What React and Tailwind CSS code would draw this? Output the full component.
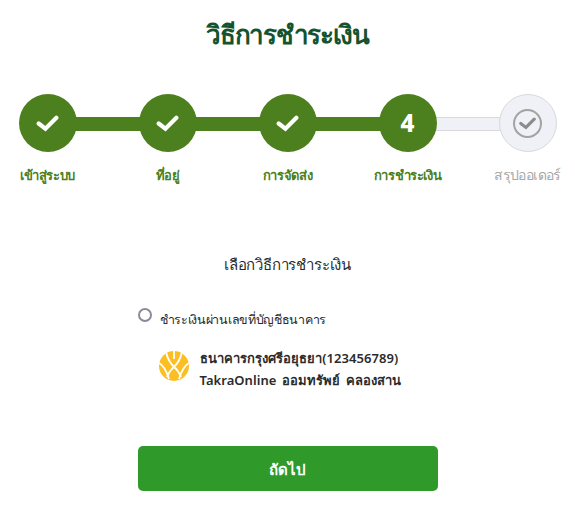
const steps = [
  { label: 'เข้าสู่ระบบ', done: true },
  { label: 'ที่อยู่', done: true },
  { label: 'การจัดส่ง', done: true },
  { label: 'การชำระเงิน', num: '4' },
  { label: 'สรุปออเดอร์', pending: true },
]

function CheckMark({ className, width, height, strokeWidth }) {
  return (
    <svg width={width} height={height} viewBox="0 0 24 16" className={className} fill="none" stroke="currentColor" strokeWidth={strokeWidth} strokeLinecap="round" strokeLinejoin="miter">
      <path d="M3.5 8 L10 13 L20.5 2.5" />
    </svg>
  )
}

function Step({ step }) {
  return (
    <div className="relative z-10 flex w-[120px] shrink-0 flex-col items-center">
      {step.pending ? (
        <div className="flex h-[58px] w-[58px] items-center justify-center rounded-full border border-[#d8d8de] bg-[#eff1f7]">
          <div className="flex h-[29px] w-[29px] items-center justify-center rounded-full border-2 border-[#a3a3a3]">
            <CheckMark width={19} height={13} strokeWidth={4} className="text-[#8c8c8c]" />
          </div>
        </div>
      ) : (
        <div className="flex h-[58px] w-[58px] items-center justify-center rounded-full bg-[#4c7f1d] text-white">
          {step.done ? <CheckMark width={25} height={17} strokeWidth={4} /> : <span className="text-[24px] font-extrabold leading-none">{step.num}</span>}
        </div>
      )}
      <div className={`mt-[12px] whitespace-nowrap leading-[22px] ${step.pending ? 'text-[14px] tracking-[-0.6px] text-[#a8a8a8]' : 'text-[13px] tracking-[-0.35px] font-bold text-[#4c7f1d]'}`}>
        {step.label}
      </div>
    </div>
  )
}

export default function App() {
  return (
    <div className="flex h-[509px] w-[575px] flex-col items-center overflow-hidden bg-white font-['Noto_Sans','Noto_Sans_CJK_SC',sans-serif] text-[#2b2b2b]">
      <h1 className="mt-[13px] text-[26px] font-bold leading-[42px] tracking-[-1.3px] text-[#14532d]">วิธีการชำระเงิน</h1>

      <div className="relative mt-[39px] flex w-full justify-center">
        <div className="absolute left-[48px] top-[23px] h-[14px] w-[360px] bg-[#4c7f1d]" />
        <div className="absolute left-[408px] top-[23px] h-[14px] w-[120px] border-y border-[#d8d8de] bg-[#eff1f7]" />
        {steps.map(step => <Step key={step.label} step={step} />)}
      </div>

      <h2 className="mt-[65px] text-[15px] font-medium leading-[26px] tracking-[-0.2px]">เลือกวิธีการชำระเงิน</h2>

      <div className="mt-[31px] w-[300px]">
        <label className="flex items-start gap-2">
          <span className="h-[14px] w-[14px] rounded-full border-2 border-[#8a8a9a] bg-white" />
          <span className="mt-[1px] text-[12.5px] leading-[22px] tracking-[-0.3px]">ชำระเงินผ่านเลขที่บัญชีธนาคาร</span>
        </label>
        <div className="ml-[21px] mt-[16px] flex items-start gap-[11px]">
          <svg width="30" height="30" viewBox="0 0 30 30" className="mt-[4px] shrink-0">
            <circle cx="15" cy="15" r="15" fill="#fbbf24" />
            <g stroke="#fff" strokeWidth="1.8" fill="none">
              <path d="M7 1 Q9 10 15 16 Q21 10 23 1" />
              <path d="M15 0 V8" />
              <path d="M0 12 Q6 15 10 28" />
              <path d="M30 12 Q24 15 20 28" />
              <path d="M15 16 Q11 19 8 26" />
              <path d="M15 16 Q19 19 22 26" />
            </g>
          </svg>
          <div className="text-[13px] font-semibold leading-[22px] tracking-[0.05px] [word-spacing:2px]">
            <div>ธนาคารกรุงศรีอยุธยา(123456789)</div>
            <div>TakraOnline ออมทรัพย์ คลองสาน</div>
          </div>
        </div>
      </div>

      <button className="mt-[55px] h-[45px] w-[300px] shrink-0 rounded-[5px] bg-[#2f9a2a] pt-[1px] text-[15px] font-bold text-white">ถัดไป</button>
    </div>
  )
}
